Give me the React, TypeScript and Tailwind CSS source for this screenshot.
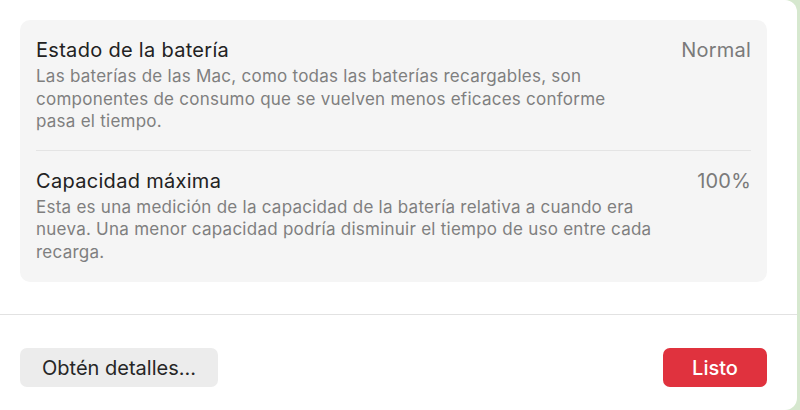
export default function App() {
  return (
    <div className="h-[410px] w-[800px] bg-[#d6e8cf] font-['Inter',sans-serif]">
      <div className="flex h-full w-[797px] flex-col rounded-r-[12px] bg-white">
        <div className="pl-5 pr-[30px] pt-5">
          <div className="rounded-[10px] bg-[#f5f5f5] px-4 pb-0.5">
            <Row
              title="Estado de la batería"
              value="Normal"
              desc={
                <>
                  Las baterías de las Mac, como todas las baterías recargables, son
                  <br />
                  componentes de consumo que se vuelven menos eficaces conforme
                  <br />
                  pasa el tiempo.
                </>
              }
            />
            <div className="h-px bg-[#e4e4e4]" />
            <Row
              title="Capacidad máxima"
              value="100%"
              desc={
                <>
                  Esta es una medición de la capacidad de la batería relativa a cuando era
                  <br />
                  nueva. Una menor capacidad podría disminuir el tiempo de uso entre cada
                  <br />
                  recarga.
                </>
              }
            />
          </div>
        </div>
        <div className="mt-[32px] h-px bg-[#e2e2e2]" />
        <div className="flex items-center justify-between pl-5 pr-[30px] pt-[33px]">
          <button className="h-[39px] w-[198px] rounded-[7px] bg-[#ececec] text-[20px] text-[#262626]">
            Obtén detalles...
          </button>
          <button className="h-[39px] w-[104px] rounded-[7px] bg-[#e0323e] text-[20px] font-medium text-white">
            Listo
          </button>
        </div>
      </div>
    </div>
  )
}

function Row({ title, value, desc }: { title: string; value: string; desc: React.ReactNode }) {
  return (
    <div className="flex justify-between pb-[17px] pt-[17px]">
      <div>
        <div className="text-[20px] leading-[26px] tracking-[0.3px] text-[#222]">{title}</div>
        <div className="mt-[2px] text-[17px] leading-[22.5px] tracking-[0.25px] text-[#7f7f7f]">{desc}</div>
      </div>
      <div className="text-[20px] leading-[26px] tracking-[0.2px] text-[#7a7a7a]">{value}</div>
    </div>
  )
}
